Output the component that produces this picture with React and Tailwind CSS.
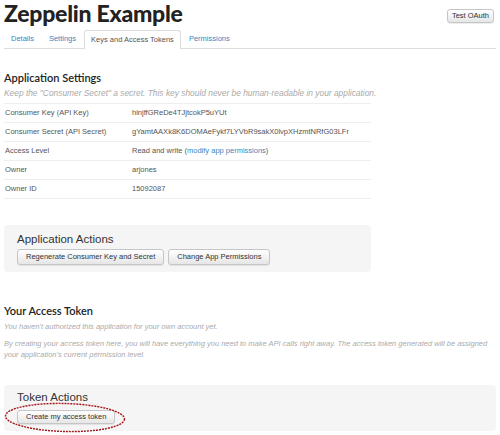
const tabs = ['Details', 'Settings', 'Keys and Access Tokens', 'Permissions']

const rows = [
    ['Consumer Key (API Key)', 'hinjffGReDe4TJjtcokP5uYUt'],
    ['Consumer Secret (API Secret)', 'gYamtAAXk8K6DOMAeFykf7LYVbR9sakX0lvpXHzmtNRfG03LFr'],
    ['Access Level', null],
    ['Owner', 'arjones'],
    ['Owner ID', '15092087'],
]

const Btn = ({ children, className = "h-[16px] px-[8px]" }) => (
    <button className={"rounded-[3px] border border-[#c6c6c6] bg-linear-to-b from-white to-[#e6e6e6] text-[7.5px] leading-none text-[#333] shadow-[0_1px_1px_rgba(0,0,0,0.08)] " + className}>
        {children}
    </button>
)

const App = () => {
    return (
        <div className="w-[500px] h-[435px] overflow-hidden bg-white px-[4px] font-['Liberation_Sans',Arial,sans-serif] text-[#555]">
            <div className="flex h-[30px] items-start justify-between">
                <h1 className="mt-[-1px] font-['Lato',sans-serif] text-[23px] font-black leading-[28px] tracking-[-0.25px] text-[#222]">Zeppelin Example</h1>
                <div className="mt-[9px] mr-[2px] flex"><Btn className="h-[14px] px-[4px]">Test OAuth</Btn></div>
            </div>

            <div className="flex h-[19px] border-b border-[#ddd]">
                {tabs.map((t, i) => (
                    <div key={t} className={"mr-[1px] text-[7.5px] leading-[18px] " + (i === 2 ? "mb-[-1px] h-[19px] rounded-t-[3px] border border-b-0 border-[#ddd] bg-white px-[6px] text-[#555]" : "px-[7px] text-[#3b86bd]")}>
                        {t}
                    </div>
                ))}
            </div>

            <h2 className="mt-[22px] font-['Lato',sans-serif] text-[11px] font-semibold leading-[14px] text-[#222]">Application Settings</h2>
            <p className="mt-[2px] text-[8.4px] italic leading-[12px] text-[#aaa]">Keep the "Consumer Secret" a secret. This key should never be human-readable in your application.</p>

            <table className="mt-[4px] w-[367px] border-collapse text-[7.5px]">
                <tbody>
                    {rows.map(([k, v]) => (
                        <tr key={k} className="h-[19px] border-y border-[#eee]">
                            <td className="w-[128px] pl-[1px]">{k}</td>
                            <td>{v ?? <>Read and write (<span className="text-[#3b86bd]">modify app permissions</span>)</>}</td>
                        </tr>
                    ))}
                </tbody>
            </table>

            <div className="mt-[26px] w-[367px] rounded-[4px] bg-[#f5f5f5] px-[13px] pt-[6px] pb-[7px]">
                <h3 className="text-[11.5px] leading-[16px] text-[#333]">Application Actions</h3>
                <div className="mt-[2px] flex gap-[4px]">
                    <Btn>Regenerate Consumer Key and Secret</Btn>
                    <Btn>Change App Permissions</Btn>
                </div>
            </div>

            <h2 className="mt-[32px] font-['Lato',sans-serif] text-[11px] font-semibold leading-[14px] text-[#222]">Your Access Token</h2>
            <p className="mt-[3px] text-[7.5px] italic leading-[12px] text-[#aaa]">You haven't authorized this application for your own account yet.</p>
            <p className="mt-[4.5px] text-[7.5px] italic leading-[11px] text-[#aaa]">By creating your access token here, you will have everything you need to make API calls right away. The access token generated will be assigned your application's current permission level.</p>

            <div className="relative mt-[25px] rounded-[4px] bg-[#f5f5f5] px-[13px] pt-[4px] pb-[7px]">
                <h3 className="text-[11.5px] leading-[16px] text-[#333]">Token Actions</h3>
                <div className="mt-[5px] flex">
                    <Btn className="h-[14px] px-[8px]">Create my access token</Btn>
                </div>
                {/* red marker round the button */}
                <svg className="absolute left-0 top-[17px] h-[31px] w-[122px]" viewBox="0 0 122 31">
                    <ellipse cx="61" cy="15.5" rx="59.5" ry="14" fill="none" stroke="#a4161a" strokeWidth="1.4" strokeDasharray="2 1" transform="rotate(1.5 61 15.5)" />
                </svg>
            </div>
        </div>
    )
}

export default App
